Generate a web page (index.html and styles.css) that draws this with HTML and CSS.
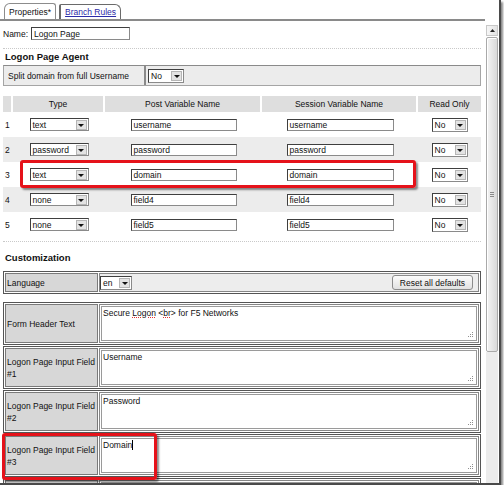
FILE: index.html
```html
<!DOCTYPE html>
<html>
<head>
<meta charset="utf-8">
<link rel="stylesheet" href="styles.css">
</head>
<body>
<div class="frame">
  <div class="main">
    <div class="tabs">
      <div class="tab tab-active">Properties*</div>
      <div class="tab tab-link"><a href="#">Branch Rules</a></div>
    </div>

    <div class="name-row">
      <span>Name:</span>
      <div class="input name-input">Logon Page</div>
    </div>

    <div class="sep sep-top"></div>
    <h2 class="heading">Logon Page Agent</h2>

    <div class="split">
      <div class="split-label">Split domain from full Username</div>
      <div class="split-value">
        <div class="select sel-no"><span>No</span><i class="dd"></i></div>
      </div>
    </div>

    <div class="vars">
      <div class="vrow head">
        <div class="hc"></div>
        <div class="hc">Type</div>
        <div class="hc">Post Variable Name</div>
        <div class="hc">Session Variable Name</div>
        <div class="hc">Read Only</div>
      </div>
      <div class="vrow">
        <div class="num">1</div>
        <div class="select sel-type"><span>text</span><i class="dd"></i></div>
        <div class="input in-post">username</div>
        <div class="input in-sess">username</div>
        <div class="select sel-no"><span>No</span><i class="dd"></i></div>
      </div>
      <div class="vrow alt">
        <div class="num">2</div>
        <div class="select sel-type"><span>password</span><i class="dd"></i></div>
        <div class="input in-post">password</div>
        <div class="input in-sess">password</div>
        <div class="select sel-no"><span>No</span><i class="dd"></i></div>
      </div>
      <div class="vrow">
        <div class="num">3</div>
        <div class="select sel-type"><span>text</span><i class="dd"></i></div>
        <div class="input in-post">domain</div>
        <div class="input in-sess">domain</div>
        <div class="select sel-no"><span>No</span><i class="dd"></i></div>
      </div>
      <div class="vrow alt">
        <div class="num">4</div>
        <div class="select sel-type"><span>none</span><i class="dd"></i></div>
        <div class="input in-post">field4</div>
        <div class="input in-sess">field4</div>
        <div class="select sel-no"><span>No</span><i class="dd"></i></div>
      </div>
      <div class="vrow">
        <div class="num">5</div>
        <div class="select sel-type"><span>none</span><i class="dd"></i></div>
        <div class="input in-post">field5</div>
        <div class="input in-sess">field5</div>
        <div class="select sel-no"><span>No</span><i class="dd"></i></div>
      </div>
    </div>

    <div class="sep sep-mid"></div>
    <h2 class="heading heading-cust">Customization</h2>

    <div class="crow lang">
      <div class="clabel">Language</div>
      <div class="cval lang-val">
        <div class="select sel-en"><span>en</span><i class="dd"></i></div>
        <button class="reset">Reset all defaults</button>
      </div>
    </div>

    <div class="ta-rows">
      <div class="crow ta-row">
        <div class="clabel">Form Header Text</div>
        <div class="cval ta-val">
          <div class="textarea">Secure <span class="spell">Logon</span> &lt;<span class="spell">br</span>&gt; for F5 Networks<svg class="grip" width="7" height="7" viewBox="0 0 7 7"><rect x="5" y="1" width="1" height="1"/><rect x="3" y="3" width="1" height="1"/><rect x="5" y="3" width="1" height="1"/><rect x="1" y="5" width="1" height="1"/><rect x="3" y="5" width="1" height="1"/><rect x="5" y="5" width="1" height="1"/></svg></div>
        </div>
      </div>
      <div class="crow ta-row">
        <div class="clabel"><span><span class="nw">Logon Page Input Field</span> #1</span></div>
        <div class="cval ta-val">
          <div class="textarea">Username<svg class="grip" width="7" height="7" viewBox="0 0 7 7"><rect x="5" y="1" width="1" height="1"/><rect x="3" y="3" width="1" height="1"/><rect x="5" y="3" width="1" height="1"/><rect x="1" y="5" width="1" height="1"/><rect x="3" y="5" width="1" height="1"/><rect x="5" y="5" width="1" height="1"/></svg></div>
        </div>
      </div>
      <div class="crow ta-row">
        <div class="clabel"><span><span class="nw">Logon Page Input Field</span> #2</span></div>
        <div class="cval ta-val">
          <div class="textarea">Password<svg class="grip" width="7" height="7" viewBox="0 0 7 7"><rect x="5" y="1" width="1" height="1"/><rect x="3" y="3" width="1" height="1"/><rect x="5" y="3" width="1" height="1"/><rect x="1" y="5" width="1" height="1"/><rect x="3" y="5" width="1" height="1"/><rect x="5" y="5" width="1" height="1"/></svg></div>
        </div>
      </div>
      <div class="crow ta-row">
        <div class="clabel"><span><span class="nw">Logon Page Input Field</span> #3</span></div>
        <div class="cval ta-val">
          <div class="textarea">Domain<b class="caret"></b><svg class="grip" width="7" height="7" viewBox="0 0 7 7"><rect x="5" y="1" width="1" height="1"/><rect x="3" y="3" width="1" height="1"/><rect x="5" y="3" width="1" height="1"/><rect x="1" y="5" width="1" height="1"/><rect x="3" y="5" width="1" height="1"/><rect x="5" y="5" width="1" height="1"/></svg></div>
        </div>
      </div>
      <div class="crow ta-row">
        <div class="clabel"></div>
        <div class="cval ta-val">
          <div class="textarea"></div>
        </div>
      </div>
    </div>

    <div class="highlight hl-row"></div>
    <div class="highlight hl-field"></div>
  </div>

  <div class="scroll">
    <div class="sb-up">
      <svg width="5" height="3" viewBox="0 0 5 3"><polygon points="0,3 5,3 2.5,0" fill="#222"/></svg>
    </div>
    <div class="sb-thumb">
      <div class="grip-lines"><i></i><i></i><i></i></div>
    </div>
    <div class="sb-track"></div>
  </div>
</div>
</body>
</html>
```

FILE: styles.css
```css
* { box-sizing: border-box; }

html, body {
  margin: 0;
  padding: 0;
  background: #fff;
}

body {
  font-family: "Liberation Sans", Arial, sans-serif;
  font-size: 8.5px;
  color: #111;
}

.frame {
  position: relative;
  width: 501px;
  height: 485px;
  display: flex;
  border-right: 2px solid #4a4a4a;
  border-bottom: 2px solid #4a4a4a;
  box-shadow: 2px 2px 2px #8a8a8a;
  overflow: hidden;
  background: #fff;
}

.main {
  position: relative;
  width: 486px;
  flex: none;
  padding: 0 5px 0 3px;
}

/* tabs */
.tabs {
  display: flex;
  align-items: flex-end;
  height: 21px;
  margin: 0 -4px 0 -3px;
  padding-left: 4px;
  gap: 3px;
  border-bottom: 2px solid #8a8a8a;
}

.tab {
  height: 16px;
  padding: 0 4px;
  border: 1px solid #8c8c8c;
  border-bottom: none;
  display: flex;
  align-items: center;
  background: #fff;
  white-space: nowrap;
}

.tab-active {
  border-radius: 6px 3px 0 0;
}

.tab-link {
  height: 15px;
  border-color: #6a6a6a;
  border-left-width: 2px;
  border-radius: 2px 6px 0 0;
}

.tab-link a {
  color: #2b2ba8;
  text-decoration: underline;
}

/* name */
.name-row {
  display: flex;
  align-items: center;
  gap: 3px;
  margin-top: 6px;
  height: 13px;
}

.input {
  height: 12px;
  border: 1px solid #8a8a8a;
  border-top-color: #3f3f3f;
  border-left-color: #3f3f3f;
  background: #fff;
  padding: 0 2px;
  display: flex;
  align-items: center;
  white-space: nowrap;
}

.name-input {
  width: 99px;
  height: 13px;
}

.sep {
  border-top: 1px dotted #c9c9c9;
}

.sep-top { margin-top: 8px; }
.sep-mid { margin-top: 4px; }

.heading {
  margin: 0;
  font-size: 9.5px;
  font-weight: bold;
  line-height: 16px;
  padding-left: 2px;
  color: #111;
}

.heading-cust {
  margin-top: 8px;
  margin-bottom: 5px;
}

/* split */
.split {
  display: flex;
  height: 21px;
  border: 1px solid #a5a5a5;
  border-top-color: #8a8a8a;
  background: #ececec;
}

.split-label {
  width: 142px;
  border-right: 2px solid #8a8a8a;
  padding-left: 4px;
  display: flex;
  align-items: center;
}

.split-value {
  padding-left: 2px;
  display: flex;
  align-items: center;
}

/* select */
.select {
  height: 14px;
  border: 1px solid #8a8a8a;
  border-top-color: #3f3f3f;
  border-left-color: #3f3f3f;
  background: #fff;
  display: flex;
  align-items: center;
  padding-left: 2px;
}

.select span {
  flex: 1;
  white-space: nowrap;
}

.dd {
  width: 11px;
  height: 10px;
  margin-right: 1px;
  background: #e3e3e3;
  border: 1px solid #b5b5b5;
  display: flex;
  align-items: center;
  justify-content: center;
}

.dd::after {
  content: "";
  border-left: 3px solid transparent;
  border-right: 3px solid transparent;
  border-top: 3px solid #111;
  margin-top: 1px;
}

.sel-no { width: 36px; }
.sel-type { width: 59px; height: 13px; }
.sel-en { width: 32px; }

/* variables table */
.vars {
  margin-top: 10px;
}

.vrow {
  display: grid;
  grid-template-columns: 10px 92px 157px 156px 1fr;
  align-items: center;
  justify-items: center;
  height: 25px;
  background: #fff;
}

.vrow.alt {
  background: #ececec;
}

.vrow.head {
  height: 16px;
  background: #dedede;
}

.hc {
  width: 100%;
  height: 100%;
  display: flex;
  align-items: center;
  justify-content: center;
  border-right: 2px solid #fff;
}

.hc:last-child {
  border-right: none;
}

.num {
  justify-self: start;
  padding-left: 2px;
}

.in-post { width: 106px; }
.in-sess { width: 107px; }

/* customization */
.crow {
  display: flex;
  border: 1px solid #555;
  padding: 1px;
  gap: 1px;
  background: #fff;
}

.lang {
  height: 23px;
}

.clabel {
  width: 93px;
  flex: none;
  background: #d7d7d7;
  border: 1px solid #7a7a7a;
  padding: 0 1px;
  display: flex;
  align-items: center;
  line-height: 12px;
}

.nw {
  white-space: nowrap;
}

.cval {
  flex: 1;
  border: 1px solid #868686;
  display: flex;
  align-items: center;
}

.lang-val {
  background: #ededed;
  padding: 0 5px 0 0;
}

.reset {
  margin-left: auto;
  height: 15px;
  padding: 0 7px;
  font-family: "Liberation Sans", Arial, sans-serif;
  font-size: 8.5px;
  color: #111;
  border: 1px solid #8b8b8b;
  border-radius: 3px;
  background: linear-gradient(#fbfbfb, #e1e1e1);
}

.ta-rows {
  margin-top: 8px;
  display: flex;
  flex-direction: column;
  gap: 1px;
}

.ta-row {
  height: 43px;
  flex: none;
}

.ta-val {
  padding: 1px;
  background: #fff;
  align-items: stretch;
}

.textarea {
  position: relative;
  flex: 1;
  border: 1px solid #9a9a9a;
  padding: 1px 1px;
  background: #fff;
  white-space: nowrap;
}

.spell {
  text-decoration: underline dotted #e03030;
  text-decoration-thickness: 1px;
  text-underline-offset: 1px;
}

.caret {
  display: inline-block;
  width: 1px;
  height: 10px;
  background: #000;
  vertical-align: -2px;
}

.grip {
  position: absolute;
  right: 2px;
  bottom: 2px;
  fill: #8f8f8f;
}

/* red annotation boxes */
.highlight {
  position: absolute;
  border: 3px solid #e5121a;
  border-radius: 3px;
  box-shadow: 2px 2px 2px rgba(0, 0, 0, 0.45);
}

.hl-row {
  left: 20px;
  top: 160px;
  width: 396px;
  height: 28px;
}

.hl-field {
  left: 2px;
  top: 433px;
  width: 155px;
  height: 47px;
}

/* scrollbar */
.scroll {
  width: 12px;
  flex: none;
  padding-top: 25px;
  display: flex;
  flex-direction: column;
  background: #fff;
}

.sb-up {
  height: 11px;
  border: 1px solid #c8c8c8;
  background: linear-gradient(90deg, #f6f6f6, #e2e2e2);
  display: flex;
  align-items: center;
  justify-content: center;
}

.sb-thumb {
  margin-top: 1px;
  height: 315px;
  border: 1px solid #a9a9a9;
  border-radius: 2px;
  background: linear-gradient(90deg, #f4f4f4, #d9d9d9);
  box-shadow: inset 1px 1px 0 #fff;
  display: flex;
  align-items: center;
  justify-content: center;
}

.grip-lines {
  display: flex;
  flex-direction: column;
  gap: 1px;
}

.grip-lines i {
  display: block;
  width: 4px;
  height: 1px;
  background: #8a8a8a;
}

.sb-track {
  flex: 1;
  background: #ececec;
}
```
